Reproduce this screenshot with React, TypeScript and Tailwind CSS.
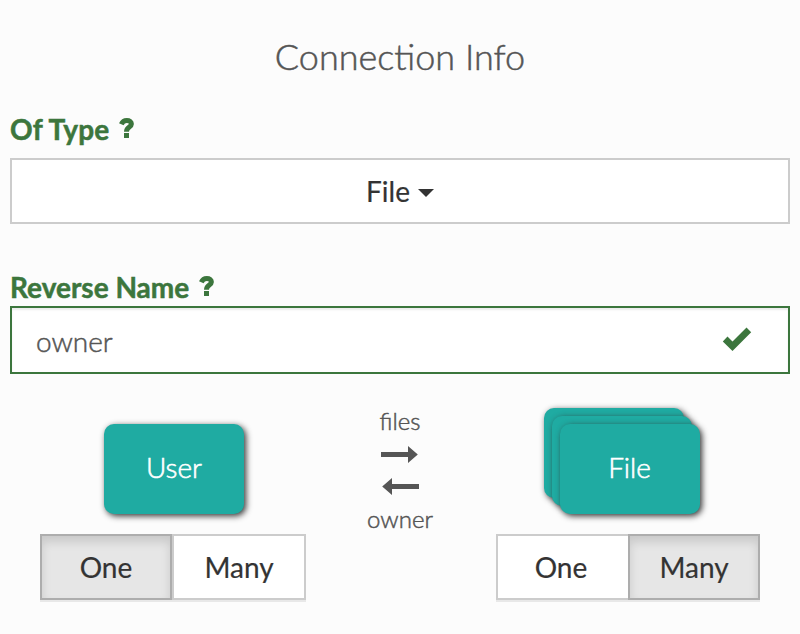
import React from "react";

function QuestionIcon() {
  return (
    <svg className="block" width="16" height="20" viewBox="0 0 16 20" fill="none" stroke="currentColor" strokeWidth="5" aria-label="Help">
      <path d="M2.300 6.200C3.400 3.800 5.300 2.500 7.800 2.500C10.600 2.500 12.400 3.800 12.400 6C12.400 9.200 7.500 9 7.500 13.700" />
      <path d="M5 17.500H10" />
    </svg>
  );
}

function FieldLabel({ text, width }: { text: string; width: string }) {
  return (
    <div className="flex h-[34px] items-center text-[28px] font-bold leading-[34px] text-[#3c763d] [-webkit-text-stroke:0.5px]">
      <span className={`whitespace-nowrap ${width}`}>{text}</span>
      <span className="-mt-[2px]"><QuestionIcon /></span>
    </div>
  );
}

function Toggle({ many }: { many?: boolean }) {
  const base = "flex h-[66px] items-center justify-center border-2 text-[28px] leading-none text-[#333] [-webkit-text-stroke:0.2px]";
  const on = "border-[#adadad] bg-[#e6e6e6] shadow-[inset_0_6px_10px_rgba(0,0,0,0.125)]";
  const off = "border-[#ccc] bg-white";
  return (
    <div className={`flex shadow-[0_2px_0_rgba(0,0,0,0.08)] ${many ? "w-[264px]" : "w-[266px]"}`}>
      <button className={many ? `${base} ${off} w-[132px] border-r-0 pr-[4px]` : `${base} ${on} w-[132px]`}>One</button>
      <button className={many ? `${base} ${on} w-[132px]` : `${base} ${off} w-[134px]`}>Many</button>
    </div>
  );
}

const card =
  "flex h-[90px] w-[140px] items-center justify-center rounded-[10px] bg-[#1faba2] pb-[5px] text-[28px] font-light leading-none text-white shadow-[2px_2px_6px_#333] [-webkit-text-stroke:0.6px]";

export default function App() {
  return (
    <main className="h-[634px] w-[800px] overflow-hidden bg-[#fcfcfc] px-[10px] font-['Lato',sans-serif] text-[#555]">
      <h1 className="pt-[34px] text-center text-[36px] font-light leading-[44px] [-webkit-text-stroke:0.5px]">Connection Info</h1>
      <div className="mt-[34px]">
        <FieldLabel text="Of Type" width="w-[109px] tracking-[0.2px]" />
      </div>
      <button className="mt-[12px] flex h-[66px] w-full items-center justify-center gap-2 border-2 border-[#ccc] bg-white text-[28px] leading-none text-[#333] [-webkit-text-stroke:0.2px]">
        <span>File</span>
        <span className="mt-[3px] h-0 w-0 border-x-8 border-t-8 border-x-transparent border-t-[#333]" />
      </button>
      <div className="mt-[46px]">
        <FieldLabel text="Reverse Name" width="w-[189px]" />
      </div>
      <div className="mt-[2px] flex h-[68px] items-center justify-between border-2 border-[#3c763d] bg-white pl-6 pr-[36px] text-[28px] font-light leading-none shadow-[inset_0_2px_2px_rgba(0,0,0,0.075)] [-webkit-text-stroke:0.5px]">
        <span className="pt-[2px]">owner</span>
        <svg className="-mt-[2px]" width="30" height="25" viewBox="0 0 30 25" fill="#3c763d">
          <path d="M.8 14.500L5.500 9.500L10.500 14.500L24.500 .5L29.200 5.200L10.500 24Z" />
        </svg>
      </div>
      <div className="mt-[34px] flex justify-between px-[30px]">
        <section className="flex w-[266px] flex-col items-center">
          <div className="h-[126px] pl-[2px] pt-4">
            <div className={card}>User</div>
          </div>
          <Toggle />
        </section>
        <div className="-mt-[2px] mr-[2px] flex w-[80px] flex-col items-center text-2xl font-light leading-[29px] [-webkit-text-stroke:0.5px]">
          <span>files</span>
          <svg className="mb-[9px] mt-[11px] overflow-visible" width="38" height="49" viewBox="0 0 38 49" fill="#555">
            <path d="M0 6H27V0L36.800 8.500L27 17V11H0Z" />
            <path d="M38 38H11V32L1.200 40.500L11 49V43H38Z" />
          </svg>
          <span>owner</span>
        </div>
        <section className="flex w-[264px] flex-col items-center">
          <div className="relative h-[126px] w-[168px]">
            <div className={`absolute left-0 top-0 ${card}`} />
            <div className={`absolute left-2 top-2 ${card}`} />
            <div className={`absolute left-4 top-4 ${card} pr-px`}>File</div>
          </div>
          <Toggle many />
        </section>
      </div>
    </main>
  );
}
